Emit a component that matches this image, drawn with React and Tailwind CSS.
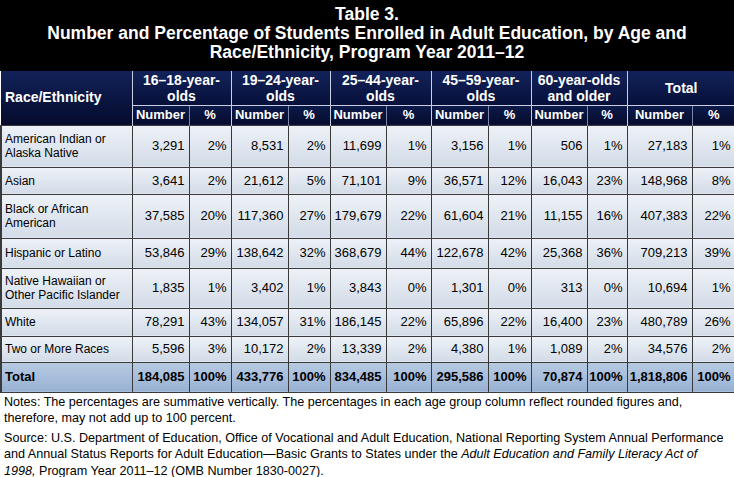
import React from 'react';

const rows = [
  { label: ['American Indian or', 'Alaska Native'], h: 'h-[42px]', v: ['3,291', '2%', '8,531', '2%', '11,699', '1%', '3,156', '1%', '506', '1%', '27,183', '1%'] },
  { label: ['Asian'], h: 'h-[27px]', v: ['3,641', '2%', '21,612', '5%', '71,101', '9%', '36,571', '12%', '16,043', '23%', '148,968', '8%'] },
  { label: ['Black or African', 'American'], h: 'h-[44px]', v: ['37,585', '20%', '117,360', '27%', '179,679', '22%', '61,604', '21%', '11,155', '16%', '407,383', '22%'] },
  { label: ['Hispanic or Latino'], h: 'h-[30px]', v: ['53,846', '29%', '138,642', '32%', '368,679', '44%', '122,678', '42%', '25,368', '36%', '709,213', '39%'] },
  { label: ['Native Hawaiian or', 'Other Pacific Islander'], h: 'h-[40px]', v: ['1,835', '1%', '3,402', '1%', '3,843', '0%', '1,301', '0%', '313', '0%', '10,694', '1%'] },
  { label: ['White'], h: 'h-[28px]', v: ['78,291', '43%', '134,057', '31%', '186,145', '22%', '65,896', '22%', '16,400', '23%', '480,789', '26%'] },
  { label: ['Two or More Races'], h: 'h-[26px]', v: ['5,596', '3%', '10,172', '2%', '13,339', '2%', '4,380', '1%', '1,089', '2%', '34,576', '2%'] },
];

const totals = ['184,085', '100%', '433,776', '100%', '834,485', '100%', '295,586', '100%', '70,874', '100%', '1,818,806', '100%'];

const groups = [
  ['16–18-year-', 'olds'],
  ['19–24-year-', 'olds'],
  ['25–44-year-', 'olds'],
  ['45–59-year-', 'olds'],
  ['60-year-olds', 'and older'],
  ['Total'],
];

const widths = [131, 57, 42, 57, 42, 56, 45, 57, 43, 56, 40, 65, 43];

export default function App() {
  return (
    <div className="w-[734px] h-[477px] bg-white font-['Liberation_Sans',Arial,sans-serif] text-black overflow-hidden">
      <div className="h-[71px] bg-black text-white text-center font-bold text-[17.5px] leading-[19px] pt-[5px]">
        <div>Table 3.</div>
        <div>Number and Percentage of Students Enrolled in Adult Education, by Age and</div>
        <div>Race/Ethnicity, Program Year 2011–12</div>
      </div>

      <table className="table-fixed border-collapse w-[734px]">
        <colgroup>
          {widths.map((w, i) => (
            <col key={i} style={{ width: w }} />
          ))}
        </colgroup>
        <thead className="text-white font-bold">
          <tr className="h-[34px]">
            <th
              rowSpan={2}
              className="text-left align-middle pl-[4px] text-[14px] bg-gradient-to-b from-[#12225a] to-[#050b2c] border-r border-[#c9cfe0]"
            >
              Race/Ethnicity
            </th>
            {groups.map((g, i) => (
              <th
                key={i}
                colSpan={2}
                className="text-center align-middle text-[14px] leading-[16px] bg-gradient-to-b from-[#12225a] to-[#07103a] border-r border-b border-[#c9cfe0] last:border-r-0"
              >
                {g.map((l, j) => (
                  <div key={j}>{l}</div>
                ))}
              </th>
            ))}
          </tr>
          <tr className="h-[20px]">
            {groups.map((g, i) => (
              <React.Fragment key={i}>
                <th className="text-center text-[13px] leading-[16px] bg-gradient-to-b from-[#0d1b4c] to-[#050b2c] border-r border-[#7d86a6]">
                  Number
                </th>
                <th className="text-center text-[13px] leading-[16px] bg-gradient-to-b from-[#0d1b4c] to-[#050b2c] border-r border-[#c9cfe0] last:border-r-0">
                  %
                </th>
              </React.Fragment>
            ))}
          </tr>
        </thead>
        <tbody className="leading-[14px]">
          {rows.map((r, i) => (
            <tr key={i} className={r.h}>
              <td className="pl-[3px] text-[12px] align-middle bg-gradient-to-b from-[#eef2f8] to-[#d2dbe7] border border-l-2 border-[#3a3a3a]">
                {r.label.map((l, j) => (
                  <div key={j}>{l}</div>
                ))}
              </td>
              {r.v.map((v, j) => (
                <td
                  key={j}
                  className="text-right pr-[4px] text-[13px] bg-gradient-to-b from-[#eef2f8] to-[#d2dbe7] border border-[#3a3a3a]"
                >
                  {v}
                </td>
              ))}
            </tr>
          ))}
          <tr className="h-[30px] font-bold">
            <td className="pl-[3px] text-[13px] bg-gradient-to-b from-[#b7cae2] to-[#98b1d3] border border-l-2 border-[#3a3a3a]">
              Total
            </td>
            {totals.map((v, j) => (
              <td
                key={j}
                className="text-right pr-[4px] text-[13px] bg-gradient-to-b from-[#b7cae2] to-[#98b1d3] border border-[#3a3a3a]"
              >
                {v}
              </td>
            ))}
          </tr>
        </tbody>
      </table>

      <div className="pl-[4px] pt-[1px] text-[12.6px] leading-[16.5px] whitespace-nowrap">
        <p>
          Notes: The percentages are summative vertically. The percentages in each age group column reflect rounded figures and,
          <br />
          therefore, may not add up to 100 percent.
        </p>
        <p className="mt-[3px]">
          Source: U.S. Department of Education, Office of Vocational and Adult Education, National Reporting System Annual Performance
          <br />
          and Annual Status Reports for Adult Education—Basic Grants to States under the <i>Adult Education and Family Literacy Act of</i>
          <br />
          <i>1998,</i> Program Year 2011–12 (OMB Number 1830-0027).
        </p>
      </div>
    </div>
  );
}
